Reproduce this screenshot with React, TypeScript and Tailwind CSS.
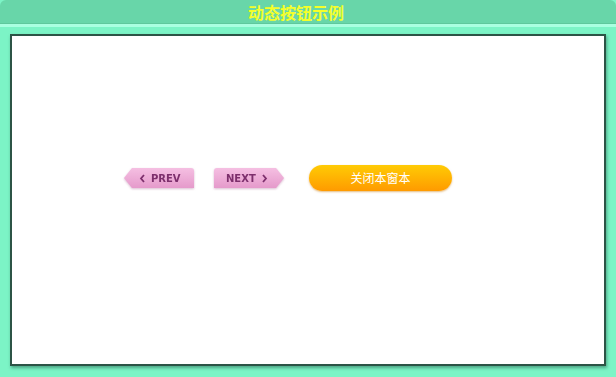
import React from "react";

const Arrow = ({dir}: {dir: "left" | "right"}) => (
    <svg width="7" height="9" viewBox="0 0 7 9" className="shrink-0">
        <path
            d={dir === "left" ? "M5 1 L2 4.5 L5 8" : "M2 1 L5 4.5 L2 8"}
            fill="none"
            stroke="#7d2f6c"
            strokeWidth="1.8"
        />
    </svg>
);

const PinkTab = ({dir, label}: {dir: "left" | "right"; label: string}) => (
    <div className="relative w-[72px] h-[22px] drop-shadow-[0_1px_1px_rgba(150,60,120,0.35)]">
        <svg width="72" height="22" viewBox="0 0 72 22" className="absolute inset-0">
            <defs>
                <linearGradient id={"pink-" + dir} x1="0" y1="0" x2="0" y2="1">
                    <stop offset="0" stopColor="#f5bfe2"/>
                    <stop offset="1" stopColor="#e59acb"/>
                </linearGradient>
            </defs>
            <path
                d={
                    dir === "left"
                        ? "M9 1 H68 Q71 1 71 4 V21 H9 L1 11 Z"
                        : "M4 1 H63 L71 11 L63 21 H1 V4 Q1 1 4 1 Z"
                }
                fill={"url(#pink-" + dir + ")"}
            />
        </svg>
        <div
            className={
                "relative flex items-center h-full gap-[5px] text-[10px] font-bold text-[#7d2f6c] font-['DejaVu_Sans',sans-serif] " +
                (dir === "left" ? "pl-[16px]" : "pl-[13px]")
            }
        >
            {dir === "left" && <Arrow dir="left"/>}
            <span>{label}</span>
            {dir === "right" && <Arrow dir="right"/>}
        </div>
    </div>
);

export default function App() {
    return (
        <div className="w-[616px] h-[377px] bg-[#7cf4c6] flex flex-col font-['Noto_Sans_CJK_SC',sans-serif]">
            <div className="h-[24px] shrink-0 bg-[#68d6a9] rounded-t-[6px] flex items-center justify-center border-b border-[#5fc89c] pr-[24px]">
                <span className="text-[16px] leading-none font-bold text-[#f4ff2a]">动态按钮示例</span>
            </div>
            <div className="h-[3px] bg-[#aaffe0]"/>
            <div className="flex-1 px-[10px] pt-[7px] pb-[11px] flex">
                <div className="flex-1 bg-white border-2 border-[#2c5446] shadow-[1px_2px_3px_rgba(30,90,70,0.5)] flex items-start pl-[111px] pt-[129px]">
                    <div className="flex items-center">
                        <PinkTab dir="left" label="PREV"/>
                        <div className="w-[18px]"/>
                        <PinkTab dir="right" label="NEXT"/>
                        <div className="w-[24px]"/>
                        <button
                            className="w-[143px] h-[26px] rounded-full bg-gradient-to-b from-[#ffcb05] to-[#ff9a00] shadow-[0_1px_2px_rgba(200,120,0,0.5)] text-white text-[12px] leading-none flex items-center justify-center"
                        >
                            关闭本窗本
                        </button>
                    </div>
                </div>
            </div>
        </div>
    );
}
